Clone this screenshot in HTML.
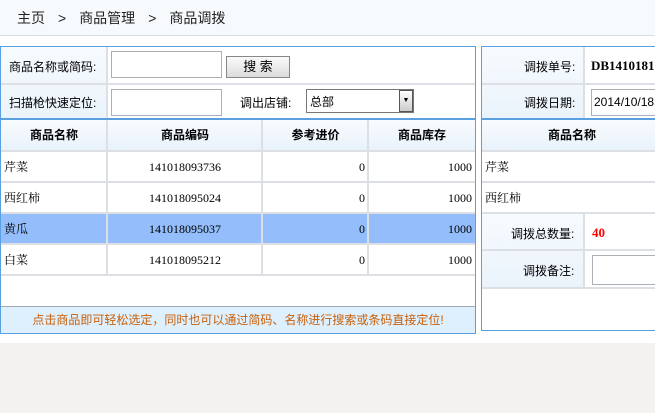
<!DOCTYPE html>
<html><head><meta charset="utf-8"><style>
*{margin:0;padding:0;box-sizing:border-box}
body{width:655px;height:413px;overflow:hidden;background:#f3f2f0;font-family:"Liberation Sans","Noto Sans CJK SC","WenQuanYi Zen Hei",sans-serif;font-size:12px;color:#000;position:relative}
.a{position:absolute}
.top{left:0;top:0;width:655px;height:343px;background:#fff}
.bc{left:0;top:0;width:655px;height:36px;background:#f6fafd;border-bottom:1px solid #d6dde4;font-size:14px;line-height:36px;padding-left:17px;color:#222}
.bc span{margin:0 13px}
.panel{border:1px solid #5a9fe0;background:#fff}
.lab{background:linear-gradient(#f7fbfe,#eaf3fb);}
.hl{background:#dcdfe3;height:2px}
.vl{background:#dcdfe3;width:2px}
.inp{border:1px solid #aab0b6;background:#fff}
.th{font-weight:bold;text-align:center;line-height:31px;background:linear-gradient(#f8fbfe,#e8f2fb)}
.td{line-height:30px;font-family:"Liberation Serif","Noto Serif CJK SC",serif}
.r{text-align:right;padding-right:3px}
.c{text-align:center}
</style></head><body>
<div class="a top"></div>
<div class="a bc">主页<span>&gt;</span>商品管理<span>&gt;</span>商品调拨</div>

<div class="a panel" style="left:0;top:46px;width:476px;height:288px"></div>
<div class="a lab" style="left:1px;top:47px;width:106px;height:72px"></div>
<div class="a hl" style="left:1px;top:83px;width:474px"></div>
<div class="a vl" style="left:106px;top:47px;height:72px"></div>
<div class="a" style="left:9px;top:58px">商品名称或简码:</div>
<div class="a" style="left:9px;top:94px">扫描枪快速定位:</div>
<div class="a inp" style="left:111px;top:51px;width:111px;height:27px"></div>
<div class="a" style="left:226px;top:56px;width:64px;height:22px;border:1px solid #888;background:linear-gradient(#fafafa,#dcdcdc);text-align:center;line-height:20px;font-size:13px">搜 索</div>
<div class="a inp" style="left:111px;top:89px;width:111px;height:27px"></div>
<div class="a" style="left:240px;top:94px">调出店铺:</div>
<div class="a inp" style="left:306px;top:89px;width:108px;height:24px;line-height:24px;padding-left:3px;border-color:#777">总部</div>
<div class="a" style="left:399px;top:90px;width:14px;height:22px;border:1px solid #555;background:linear-gradient(#fff,#ccc);font-size:7px;text-align:center;line-height:20px">▼</div>
<div class="a" style="left:1px;top:118px;width:474px;height:2px;background:#5a9fe0"></div>
<div class="a th" style="left:1px;top:120px;width:474px;height:31px"></div>
<div class="a th" style="left:1px;top:120px;width:106px">商品名称</div>
<div class="a th" style="left:108px;top:120px;width:154px">商品编码</div>
<div class="a th" style="left:263px;top:120px;width:105px">参考进价</div>
<div class="a th" style="left:369px;top:120px;width:106px">商品库存</div>
<div class="a" style="left:1px;top:213px;width:474px;height:31px;background:#93bdfb"></div>
<div class="a vl" style="left:106px;top:120px;height:155px;width:2px"></div>
<div class="a vl" style="left:261px;top:120px;height:155px"></div>
<div class="a vl" style="left:367px;top:120px;height:155px"></div>
<div class="a hl" style="left:1px;top:150px;width:474px"></div>
<div class="a hl" style="left:1px;top:181px;width:474px"></div>
<div class="a hl" style="left:1px;top:212px;width:474px"></div>
<div class="a hl" style="left:1px;top:243px;width:474px"></div>
<div class="a hl" style="left:1px;top:274px;width:474px"></div>

<div class="a td" style="left:4px;top:152px">芹菜</div>
<div class="a td c" style="left:108px;top:152px;width:154px">141018093736</div>
<div class="a td r" style="left:263px;top:152px;width:105px">0</div>
<div class="a td r" style="left:369px;top:152px;width:106px">1000</div>
<div class="a td" style="left:4px;top:183px">西红柿</div>
<div class="a td c" style="left:108px;top:183px;width:154px">141018095024</div>
<div class="a td r" style="left:263px;top:183px;width:105px">0</div>
<div class="a td r" style="left:369px;top:183px;width:106px">1000</div>
<div class="a td" style="left:4px;top:214px">黄瓜</div>
<div class="a td c" style="left:108px;top:214px;width:154px">141018095037</div>
<div class="a td r" style="left:263px;top:214px;width:105px">0</div>
<div class="a td r" style="left:369px;top:214px;width:106px">1000</div>
<div class="a td" style="left:4px;top:245px">白菜</div>
<div class="a td c" style="left:108px;top:245px;width:154px">141018095212</div>
<div class="a td r" style="left:263px;top:245px;width:105px">0</div>
<div class="a td r" style="left:369px;top:245px;width:106px">1000</div>

<div class="a" style="left:1px;top:306px;width:474px;height:27px;background:#def0fd;border-top:1px solid #a0a8b0;color:#c8600a;text-align:center;line-height:27px">点击商品即可轻松选定，同时也可以通过简码、名称进行搜索或条码直接定位!</div>

<div class="a panel" style="left:481px;top:46px;width:180px;height:285px"></div>
<div class="a lab" style="left:482px;top:47px;width:102px;height:72px"></div>
<div class="a lab" style="left:482px;top:214px;width:102px;height:74px"></div>
<div class="a vl" style="left:583px;top:47px;height:72px"></div>
<div class="a vl" style="left:583px;top:214px;height:74px"></div>
<div class="a hl" style="left:482px;top:83px;width:180px"></div>
<div class="a" style="left:482px;top:118px;width:180px;height:2px;background:#5a9fe0"></div>
<div class="a" style="left:524px;top:58px">调拨单号:</div>
<div class="a" style="left:591px;top:58px;font-family:'Liberation Serif',serif;font-weight:bold;font-size:13px">DB1410181</div>
<div class="a" style="left:524px;top:94px">调拨日期:</div>
<div class="a inp" style="left:591px;top:89px;width:70px;height:27px;line-height:25px;padding-left:2px">2014/10/18</div>
<div class="a th" style="left:482px;top:120px;width:180px;height:31px">商品名称</div>
<div class="a hl" style="left:482px;top:150px;width:180px"></div>
<div class="a hl" style="left:482px;top:181px;width:180px"></div>
<div class="a hl" style="left:482px;top:212px;width:180px"></div>
<div class="a hl" style="left:482px;top:249px;width:180px"></div>
<div class="a hl" style="left:482px;top:287px;width:180px"></div>
<div class="a td" style="left:485px;top:152px">芹菜</div>
<div class="a td" style="left:485px;top:183px">西红柿</div>
<div class="a" style="left:511px;top:225px">调拨总数量:</div>
<div class="a" style="left:592px;top:225px;color:#f00;font-weight:bold;font-family:'Liberation Serif',serif;font-size:13px">40</div>
<div class="a" style="left:523px;top:262px">调拨备注:</div>
<div class="a inp" style="left:592px;top:255px;width:70px;height:30px"></div>
</body></html>
